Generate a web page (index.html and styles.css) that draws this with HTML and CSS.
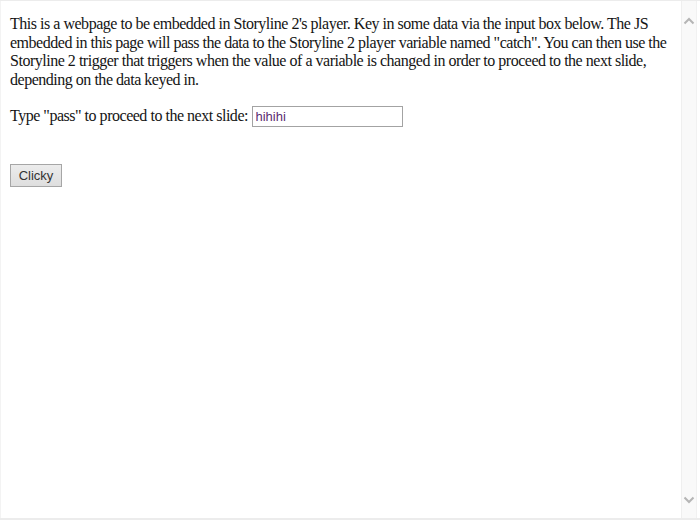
FILE: index.html
```html
<!DOCTYPE html>
<html>
<head>
<meta charset="utf-8">
<link rel="stylesheet" href="styles.css">
</head>
<body>
<div class="frame">
  <div class="content">
    <p class="intro">This is a webpage to be embedded in Storyline 2's player. Key in some data via the input box below. The JS embedded in this page will pass the data to the Storyline 2 player variable named "catch". You can then use the Storyline 2 trigger that triggers when the value of a variable is changed in order to proceed to the next slide, depending on the data keyed in.</p>
    <p class="prompt">Type "pass" to proceed to the next slide: <input class="field" type="text" value="hihihi"></p>
    <div class="actions"><button class="btn">Clicky</button></div>
  </div>
  <div class="scrollbar">
    <div class="arrow-box"><svg width="12" height="8" viewBox="0 0 12 8"><polyline points="1.5,6.5 6,2 10.5,6.5" fill="none" stroke="#b5b5b5" stroke-width="2"/></svg></div>
    <div class="track"></div>
    <div class="arrow-box"><svg width="12" height="8" viewBox="0 0 12 8"><polyline points="1.5,1.5 6,6 10.5,1.5" fill="none" stroke="#b5b5b5" stroke-width="2"/></svg></div>
  </div>
</div>
</body>
</html>
```

FILE: styles.css
```css
html, body {
  margin: 0;
  padding: 0;
  background: #fff;
}
.frame {
  display: flex;
  width: 700px;
  height: 520px;
  box-sizing: border-box;
  border-top: 1px solid #ececec;
  border-bottom: 2px solid #ececec;
  overflow: hidden;
}
.content {
  flex: 1;
  padding: 14px 8px 0 9px;
  font-family: "Liberation Serif", "Times New Roman", serif;
  font-size: 16px;
  letter-spacing: -0.48px;
  color: #141414;
  border-left: 1px solid #f3f3f3;
}
.intro {
  margin: 0 0 16px 0;
  line-height: 18.6px;
}
.prompt {
  margin: 0;
  line-height: 22px;
}
.field {
  box-sizing: border-box;
  width: 151px;
  height: 21px;
  margin: 0;
  padding: 0 3px;
  border: 1px solid #a3a3a3;
  font-family: "Liberation Sans", Arial, sans-serif;
  font-size: 13px;
  letter-spacing: 0;
  color: #5c2d72;
  vertical-align: baseline;
  background: #fff;
}
.actions {
  margin-top: 37px;
}
.btn {
  box-sizing: border-box;
  width: 52px;
  height: 23px;
  margin: 0;
  padding: 0;
  border: 1px solid #a6a6a6;
  background: linear-gradient(#ececec, #dedede);
  font-family: "Liberation Sans", Arial, sans-serif;
  font-size: 13px;
  letter-spacing: 0;
  color: #333;
  border-radius: 0;
}
.scrollbar {
  width: 14px;
  margin-right: 3px;
  background: #f9f9f9;
  border-left: 1px solid #efefef;
  border-right: 1px solid #f1f1f1;
  display: flex;
  flex-direction: column;
  padding: 14px 0 12px;
}
.arrow-box {
  height: 12px;
  display: flex;
  align-items: center;
  justify-content: center;
}
.arrow-box svg {
  display: block;
}
.track {
  flex: 1;
}
```
